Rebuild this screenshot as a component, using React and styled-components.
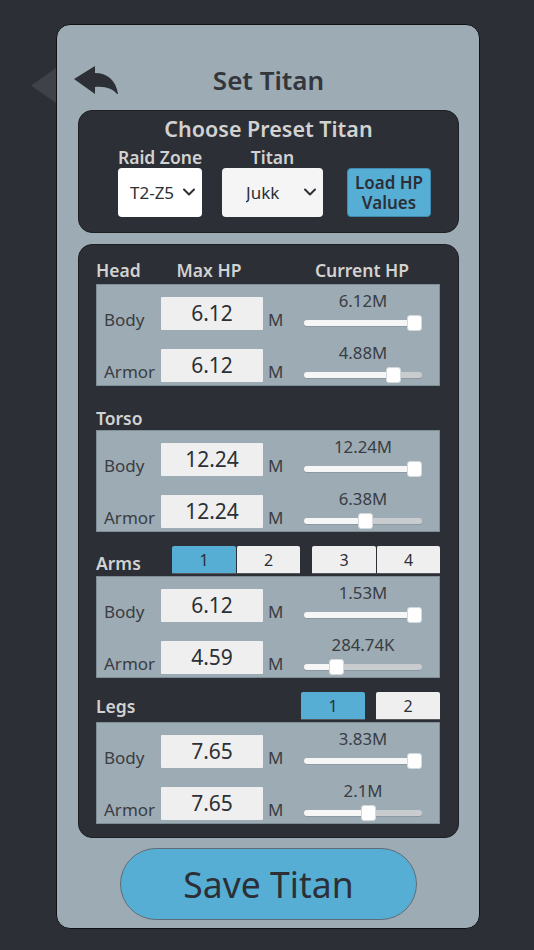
import React, { useState } from 'react';
import styled, { createGlobalStyle } from 'styled-components';
import { ChevronDown } from 'lucide-react';

const DARK = '#2c2f35';
const STEEL = '#9dabb5';
const BLUE = '#56aed5';
const LIGHT = '#efefef';

const SECTIONS = [
  {
    name: 'Head',
    rows: [
      { label: 'Body', max: '6.12', current: '6.12M', fill: 100 },
      { label: 'Armor', max: '6.12', current: '4.88M', fill: 79.7 },
    ],
  },
  {
    name: 'Torso',
    nameLift: -2,
    rows: [
      { label: 'Body', max: '12.24', current: '12.24M', fill: 100 },
      { label: 'Armor', max: '12.24', current: '6.38M', fill: 52 },
    ],
  },
  {
    name: 'Arms',
    nameLift: -1,
    tabs: [['1', '2'], ['3', '4']],
    tabGap: 12,
    rows: [
      { label: 'Body', max: '6.12', current: '1.53M', fill: 100 },
      { label: 'Armor', max: '4.59', current: '284.74K', fill: 24.3 },
    ],
  },
  {
    name: 'Legs',
    nameLift: 2,
    tabs: [['1'], ['2']],
    tabGap: 11,
    rows: [
      { label: 'Body', max: '7.65', current: '3.83M', fill: 100 },
      { label: 'Armor', max: '7.65', current: '2.1M', fill: 55 },
    ],
  },
];

const GlobalStyle = createGlobalStyle`
  * {
    box-sizing: border-box;
  }
  html,
  body {
    margin: 0;
    background: ${DARK};
  }
  body {
    font-family: 'Noto Sans', 'Open Sans', sans-serif;
    color: ${DARK};
  }
`;

const Page = styled.main`
  width: 534px;
  height: 950px;
  padding: 24px 54px 21px 56px;
  position: relative;
`;

const PrevArrow = styled.div`
  position: absolute;
  left: 31px;
  top: 68px;
  width: 25px;
  height: 35px;
  background: #3f4349;
  clip-path: polygon(0 50%, 100% 0, 100% 100%);
`;

const Panel = styled.section`
  height: 905px;
  padding: 40px 20px 0 21px;
  background: ${STEEL};
  border: 1px solid #0f1114;
  border-radius: 14px;
`;

const Header = styled.header`
  display: grid;
  grid-template-columns: 1fr auto 1fr;
  align-items: center;
  height: 34px;
  margin: 0 -4px 11px;
`;

const BackButton = styled.button`
  justify-self: start;
  display: flex;
  width: 44px;
  height: 28px;
  margin-top: -5px;
  padding: 0;
  border: 0;
  background: none;
  color: ${DARK};
`;

const Title = styled.h1`
  margin: -4px 0 0;
  font-size: 26px;
  font-weight: 600;
  line-height: 34px;
  color: #33363b;
`;

const DarkBox = styled.div`
  background: ${DARK};
  border: 1px solid #1d1f23;
  border-radius: 14px;
`;

const PresetBox = styled(DarkBox)`
  height: 123px;
  margin-bottom: 11px;
  padding-top: 4px;
`;

const PresetTitle = styled.h2`
  margin: 0 0 4px;
  font-size: 21.5px;
  font-weight: 600;
  line-height: 27px;
  text-align: center;
  color: #d2d2d2;
`;

const PresetGrid = styled.div`
  display: grid;
  grid-template-columns: 84px 101px 88px;
  column-gap: 20px;
  align-items: end;
  padding-left: 39px;
`;

const Field = styled.label`
  display: flex;
  flex-direction: column;
  align-items: center;
  font-size: 17.5px;
  font-weight: 600;
  line-height: 23px;
  white-space: nowrap;
  color: #d2d2d2;
`;

const SelectWrap = styled.div`
  position: relative;
  width: 100%;
  height: 49px;
  margin-top: -1px;
  color: ${DARK};

  svg {
    position: absolute;
    right: 3px;
    top: 14px;
    pointer-events: none;
  }
`;

const Select = styled.select`
  -webkit-appearance: none;
  appearance: none;
  width: 100%;
  height: 100%;
  padding: 0 0 0 ${(p) => p.$indent}px;
  border: 0;
  border-radius: 4px;
  background-color: ${(p) => p.$bg};
  font-family: inherit;
  font-size: 17px;
  color: ${DARK};
`;

const LoadButton = styled.button`
  height: 49px;
  margin-left: 4px;
  padding: 0;
  border: 1px solid #3f8cb0;
  border-radius: 4px;
  background: ${BLUE};
  font-family: inherit;
  font-size: 17px;
  font-weight: 600;
  line-height: 20px;
  color: ${DARK};
`;

const StatsBox = styled(DarkBox)`
  height: 594px;
  padding: 0 18px 0 17px;
`;

const SectionHead = styled.div`
  display: flex;
  align-items: flex-end;
  gap: ${(p) => p.$gap || 0}px;
  height: ${(p) => (p.$first ? 39 : 44)}px;
  padding-bottom: 2px;
`;

const SectionName = styled.h3`
  margin: 0 auto ${(p) => p.$lift}px 0;
  font-size: 17.5px;
  font-weight: 600;
  line-height: 23px;
  color: #d2d2d2;
`;

const ColumnTitles = styled.div`
  display: grid;
  grid-template-columns: 62px 102px 1fr;
  flex: none;
  width: 100%;
  height: 23px;
  font-size: 17.5px;
  font-weight: 600;
  line-height: 23px;
  color: #d2d2d2;
`;

const ColumnTitle = styled.span`
  padding-left: ${(p) => p.$inset || 0}px;
  text-align: ${(p) => p.$align || 'center'};
  white-space: nowrap;
`;

const TabPair = styled.div`
  display: flex;
`;

const Tab = styled.button`
  width: 64px;
  height: 28px;
  padding: 0;
  border: 0;
  border-left: ${(p) => (p.$joined ? '1px solid #2c2f35' : '0')};
  border-bottom: 1px solid #55595e;
  border-radius: 2px 2px 0 0;
  background: ${(p) => (p.$active ? BLUE : LIGHT)};
  font-family: inherit;
  font-size: 16px;
  color: ${DARK};
`;

const Group = styled.div`
  display: flex;
  flex-direction: column;
  gap: 13px;
  height: 102px;
  padding: 5px 0 5px 7px;
  background: ${STEEL};
  border: 1px solid #7f8d97;
`;

const Row = styled.div`
  display: grid;
  grid-template-columns: 57px 102px 41px 118px;
  align-items: end;
  height: 39px;
`;

const RowLabel = styled.span`
  font-size: 17px;
  line-height: 23px;
  color: #3a3d42;
  margin-bottom: -1px;
`;

const MaxInput = styled.input`
  width: 102px;
  height: 33px;
  padding: 0 0 2px;
  border: 0;
  border-radius: 1px;
  background: ${LIGHT};
  font-family: inherit;
  font-size: 21px;
  text-align: center;
  color: ${DARK};
`;

const Unit = styled.span`
  padding-left: 5px;
  margin-bottom: -1px;
  font-size: 17px;
  line-height: 23px;
  color: #3a3d42;
`;

const SliderBox = styled.div`
  display: flex;
  flex-direction: column;
  align-items: center;
`;

const SliderValue = styled.span`
  font-size: 16.8px;
  line-height: 21px;
  color: #3a3d42;
  white-space: nowrap;
`;

const Range = styled.input`
  -webkit-appearance: none;
  appearance: none;
  display: block;
  width: 118px;
  height: 16px;
  margin: 4px 0 -1px;
  background: none;

  &::-webkit-slider-runnable-track {
    height: 6px;
    border-radius: 3px;
    box-shadow: 0 1px 0 #8b99a2;
    background: linear-gradient(
      to right,
      #f6f6f6 var(--fill),
      #c8ccce var(--fill)
    );
  }
  &::-webkit-slider-thumb {
    -webkit-appearance: none;
    width: 15px;
    height: 16px;
    margin-top: -5px;
    border: 1px solid #d5d8da;
    border-radius: 3px;
    background: #ffffff;
  }
`;

const SaveButton = styled.button`
  display: block;
  width: 297px;
  height: 72px;
  margin: 10px 0 0 42px;
  padding: 0;
  border: 1px solid #5f6d76;
  border-radius: 36px;
  background: ${BLUE};
  font-family: inherit;
  font-size: 35.5px;
  color: ${DARK};
`;

const BackIcon = () => (
  <svg width='44' height='28' viewBox='0 0 44 28' fill='currentColor'>
    <path d='M0 13 21 0v7c12 0 21 7 23 21h-1c-4-5-11-8-22-7v7z' />
  </svg>
);

const PresetSelect = ({ bg, indent, options }) => (
  <SelectWrap>
    <Select $bg={bg} $indent={indent} defaultValue={options[0]}>
      {options.map((option) => (
        <option key={option}>{option}</option>
      ))}
    </Select>
    <ChevronDown size={20} strokeWidth={2.4} />
  </SelectWrap>
);

const HpRow = ({ label, max, current, fill }) => {
  const [value, setValue] = useState(fill);
  // the native thumb travels 103px of the 118px track
  const stop = (value / 100) * 103 + 7.5;

  return (
    <Row>
      <RowLabel>{label}</RowLabel>
      <MaxInput type='text' defaultValue={max} aria-label={`${label} max HP`} />
      <Unit>M</Unit>
      <SliderBox>
        <SliderValue>{current}</SliderValue>
        <Range
          type='range'
          min='0'
          max='100'
          step='0.1'
          value={value}
          aria-label={`${label} current HP`}
          style={{ '--fill': `${stop}px` }}
          onChange={(e) => setValue(Number(e.target.value))}
        />
      </SliderBox>
    </Row>
  );
};

const Section = ({ section, first }) => {
  const { name, nameLift, tabs, tabGap, rows } = section;
  const [active, setActive] = useState('1');

  return (
    <section>
      <SectionHead $first={first} $gap={tabGap}>
        {first ? (
          <ColumnTitles>
            <ColumnTitle $align='left'>{name}</ColumnTitle>
            <ColumnTitle>Max HP</ColumnTitle>
            <ColumnTitle $inset={24}>Current HP</ColumnTitle>
          </ColumnTitles>
        ) : (
          <SectionName $lift={nameLift}>{name}</SectionName>
        )}
        {tabs?.map((pair) => (
          <TabPair key={pair[0]}>
            {pair.map((tab, index) => (
              <Tab
                key={tab}
                type='button'
                $joined={index > 0}
                $active={active === tab}
                onClick={() => setActive(tab)}
              >
                {tab}
              </Tab>
            ))}
          </TabPair>
        ))}
      </SectionHead>
      <Group>
        {rows.map((row) => (
          <HpRow key={row.label} {...row} />
        ))}
      </Group>
    </section>
  );
};

const App = () => {
  return (
    <Page>
      <GlobalStyle />
      <PrevArrow />
      <Panel>
        <Header>
          <BackButton type='button' aria-label='Back'>
            <BackIcon />
          </BackButton>
          <Title>Set Titan</Title>
        </Header>
        <PresetBox>
          <PresetTitle>Choose Preset Titan</PresetTitle>
          <PresetGrid>
            <Field>
              Raid Zone
              <PresetSelect bg='#ffffff' indent={12} options={['T2-Z5', 'T2-Z4']} />
            </Field>
            <Field>
              Titan
              <PresetSelect bg='#f5f5f5' indent={24} options={['Jukk', 'Lojak']} />
            </Field>
            <LoadButton type='button'>
              Load HP
              <br />
              Values
            </LoadButton>
          </PresetGrid>
        </PresetBox>
        <StatsBox>
          {SECTIONS.map((section, index) => (
            <Section key={section.name} section={section} first={index === 0} />
          ))}
        </StatsBox>
        <SaveButton type='button'>Save Titan</SaveButton>
      </Panel>
    </Page>
  );
};

export default App;
